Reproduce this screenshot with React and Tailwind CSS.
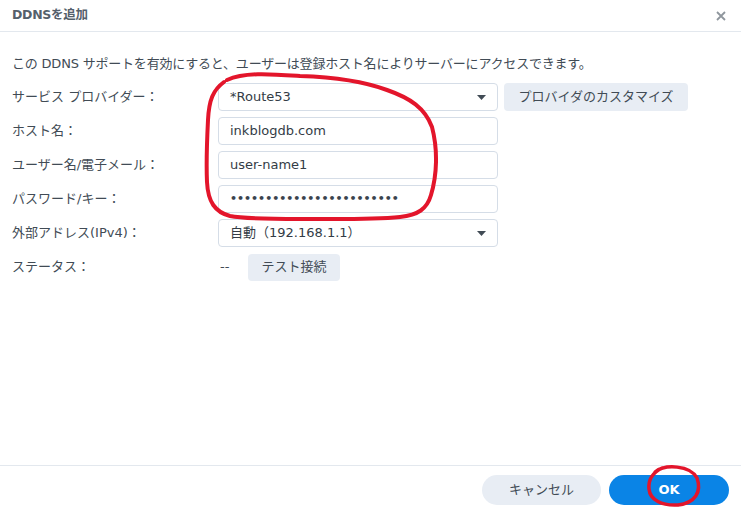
import React from "react";

const FONT = { fontFamily: '"DejaVu Sans", "Noto Sans CJK JP", sans-serif' };

function Field({ label, children }) {
  return (
    <div className="flex items-center h-[28px]">
      <div className="w-[206px] shrink-0 text-[13px] text-[#414b55]">{label}</div>
      {children}
    </div>
  );
}

function Input({ value, select, dots }) {
  return (
    <div className="flex items-center w-[280px] h-[28px] rounded-[4px] border border-[#d5dde7] bg-white px-[11px] text-[13px] text-[#333c46]">
      <span className={dots ? "text-[11px] font-bold text-[#3a434d]" : ""}>{value}</span>
      {select && (
        <svg className="ml-auto" width="9" height="5" viewBox="0 0 9 5">
          <path d="M0 0h9L4.5 5z" fill="#414b55" />
        </svg>
      )}
    </div>
  );
}

export default function App() {
  return (
    <div className="relative w-[741px] h-[511px] bg-white flex flex-col overflow-hidden" style={FONT}>
      <header className="flex items-center h-[32px] px-[12px] border-b border-[#e3e8ee] shrink-0">
        <h1 className="text-[12.5px] font-bold text-[#55606b] tracking-[-0.3px]">DDNSを追加</h1>
        <svg className="ml-auto mr-[3px]" width="10" height="10" viewBox="0 0 10 10">
          <path d="M1 1l8 8M9 1l-8 8" stroke="#8f969d" strokeWidth="1.8" />
        </svg>
      </header>

      <main className="flex-1 px-[12px] pt-[24px]">
        <p className="text-[13px] text-[#414b55] leading-[16px] tracking-[-0.2px]">
          この DDNS サポートを有効にすると、ユーザーは登録ホスト名によりサーバーにアクセスできます。
        </p>
        <div className="mt-[11px] flex flex-col gap-[6px]">
          <div className="flex items-center">
            <Field label="サービス プロバイダー：">
              <Input value="*Route53" select />
            </Field>
            <button className="ml-[6px] h-[28px] w-[184px] rounded-[4px] bg-[#e8edf4] text-[13px] text-[#414b55]">
              プロバイダのカスタマイズ
            </button>
          </div>
          <Field label="ホスト名：">
            <Input value="inkblogdb.com" />
          </Field>
          <Field label="ユーザー名/電子メール：">
            <Input value="user-name1" />
          </Field>
          <Field label="パスワード/キー：">
            <Input value={"•".repeat(24)} dots />
          </Field>
          <Field label="外部アドレス(IPv4)：">
            <Input value="自動（192.168.1.1）" select />
          </Field>
          <Field label="ステータス：">
            <span className="w-[30px] pl-[2px] text-[13px] text-[#414b55]">--</span>
            <button className="h-[27px] w-[92px] rounded-[4px] bg-[#e8edf4] text-[13px] text-[#414b55]">
              テスト接続
            </button>
          </Field>
        </div>
      </main>

      <footer className="h-[46px] shrink-0 border-t border-[#e3e8ee] flex items-start justify-end gap-[8px] pr-[12px] pt-[9px]">
        <button className="h-[30px] w-[119px] rounded-full bg-[#e8edf4] text-[13px] text-[#414b55]">キャンセル</button>
        <button className="h-[30px] w-[120px] rounded-full bg-[#0a84e6] text-[13px] font-bold text-white">OK</button>
      </footer>

      <svg className="absolute inset-0 pointer-events-none" width="741" height="511" viewBox="0 0 741 511">
        <path
          d="M227 80 C245 72 270 74 300 76 C330 77 360 80 387 90 C410 98 425 108 432 127 C438 150 437 175 431 195 C427 209 418 215 400 217 C370 220 330 219 300 219 C270 219 245 219 230 216 C215 212 208 202 207 182 C206 160 207 140 208 120 C209 100 213 90 224 82"
          fill="none"
          stroke="#e3152b"
          strokeWidth="4"
          strokeLinecap="round"
        />
        <path
          d="M655 472 C665 464 690 465 697 478 C702 492 695 503 678 505 C662 506 650 500 649 489 C648 479 654 472 662 468"
          fill="none"
          stroke="#e3152b"
          strokeWidth="3.5"
          strokeLinecap="round"
        />
      </svg>
    </div>
  );
}
